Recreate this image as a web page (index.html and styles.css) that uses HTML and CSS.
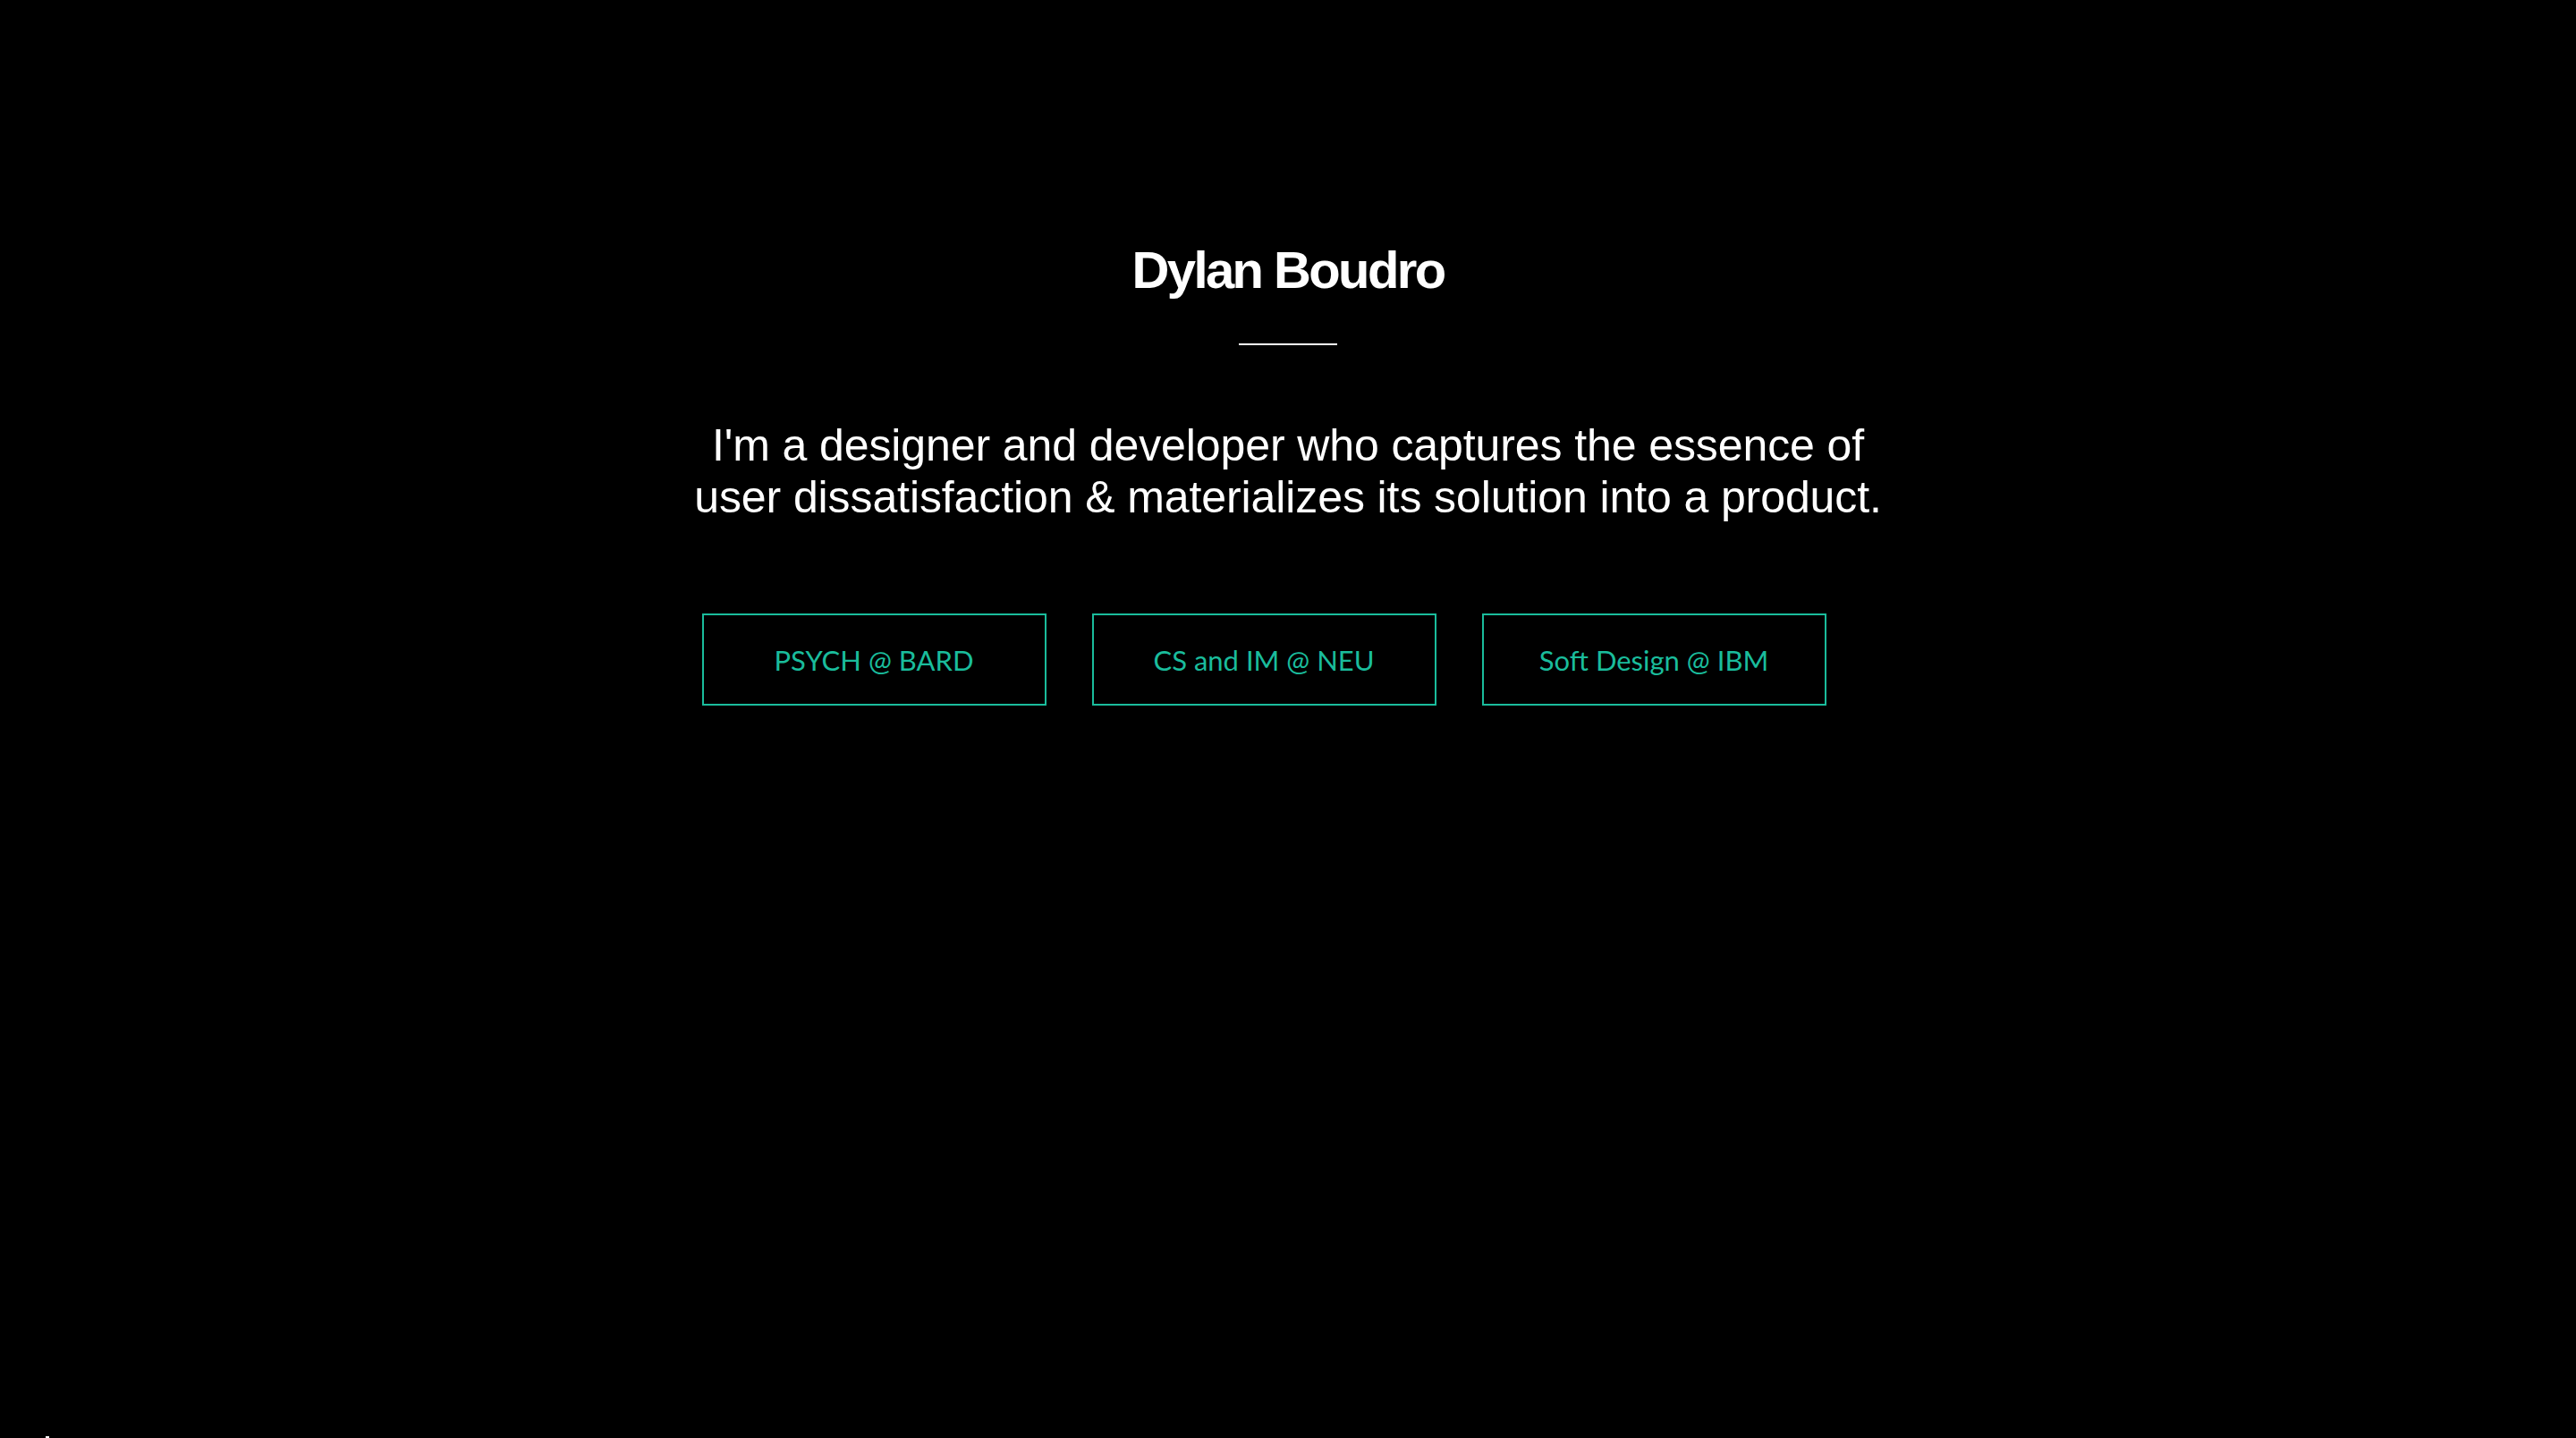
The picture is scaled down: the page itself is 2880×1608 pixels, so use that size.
FILE: index.html
```html
<!DOCTYPE html>
<html lang="en">
<head>
<meta charset="utf-8">
<title>Dylan Boudro</title>
<link rel="stylesheet" href="styles.css">
</head>
<body>
<section class="hero">
  <h1 class="name">Dylan Boudro</h1>
  <div class="rule"></div>
  <p class="intro">I'm a designer and developer who captures the essence of user dissatisfaction &amp; materializes its solution into a product.</p>
  <nav class="links">
    <a class="btn" href="#">PSYCH @ BARD</a>
    <a class="btn" href="#">CS and IM @ NEU</a>
    <a class="btn" href="#">Soft Design @ IBM</a>
  </nav>
</section>
<section class="next">
  <span class="next-mark"></span>
</section>
</body>
</html>
```

FILE: styles.css
```css
html, body {
  margin: 0;
  padding: 0;
  background: #000;
}

body {
  font-family: "Liberation Sans", Arial, Helvetica, sans-serif;
  color: #fff;
  overflow: hidden;
}

.hero {
  height: 1606px;
  display: flex;
  flex-direction: column;
  align-items: center;
  padding-top: 273px;
  box-sizing: border-box;
}

.name {
  margin: 0;
  font-size: 58px;
  line-height: 58px;
  font-weight: 700;
  letter-spacing: -2.6px;
  color: #fff;
}

.rule {
  width: 110px;
  height: 2px;
  background: #fff;
  margin-top: 53px;
}

.intro {
  margin: 83px 0 0;
  max-width: 1340px;
  font-size: 50px;
  line-height: 58px;
  letter-spacing: -0.1px;
  text-align: center;
  color: #fff;
}

.links {
  display: flex;
  justify-content: center;
  margin-top: 101px;
  padding-right: 3px;
}

.btn {
  width: 385px;
  height: 103px;
  box-sizing: border-box;
  border: 2px solid #1abc9c;
  margin-right: 51px;
  display: flex;
  align-items: center;
  justify-content: center;
  font-family: Lato, "Open Sans", sans-serif;
  font-size: 31px;
  color: #1abc9c;
  text-decoration: none;
}

.next {
  height: 2px;
  padding-left: 51px;
}

.next-mark {
  display: block;
  width: 4px;
  height: 2px;
  background: #fff;
}
```
